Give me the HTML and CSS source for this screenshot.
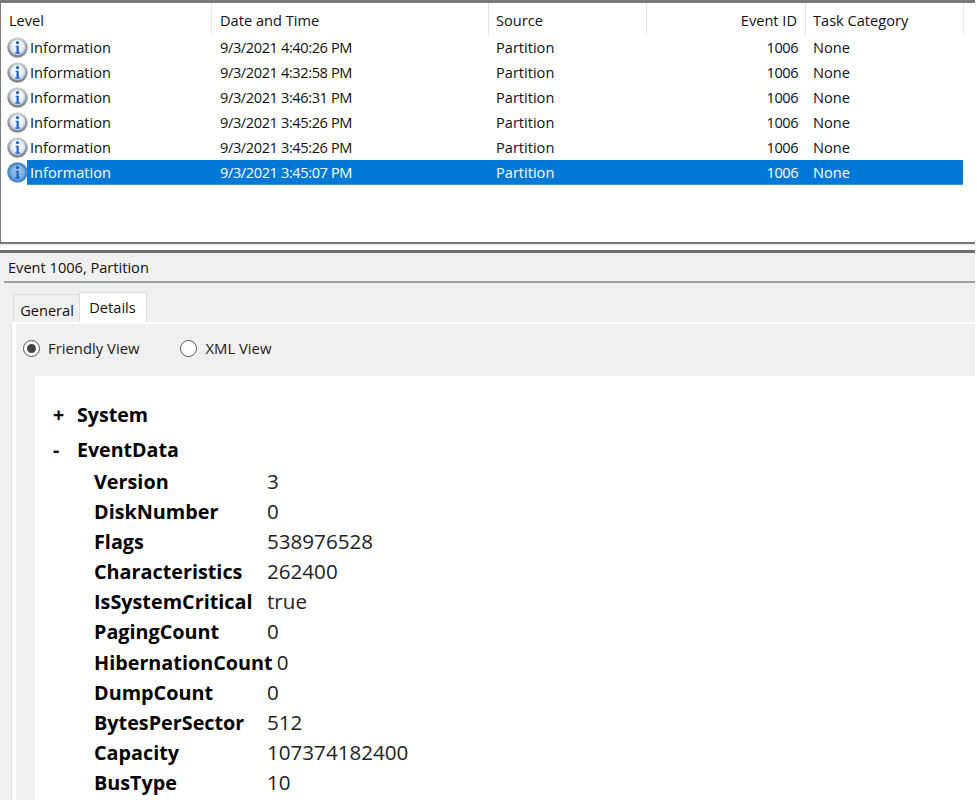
FILE: index.html
```html
<!DOCTYPE html>
<html lang="en">
<head>
<meta charset="utf-8">
<title>Event 1006, Partition</title>
<link rel="stylesheet" href="styles.css">
</head>
<body>
<svg class="defs" width="0" height="0" aria-hidden="true">
  <defs>
    <linearGradient id="ringN" x1="0" y1="0" x2="0" y2="1"><stop offset="0" stop-color="#d0d3d6"/><stop offset=".5" stop-color="#9a9ea2"/><stop offset="1" stop-color="#7f8286"/></linearGradient>
    <radialGradient id="discN" cx=".5" cy=".4" r=".6"><stop offset="0" stop-color="#ffffff"/><stop offset=".6" stop-color="#eaf0fa"/><stop offset="1" stop-color="#a9c2e6"/></radialGradient>
    <radialGradient id="discS" cx=".5" cy=".4" r=".6"><stop offset="0" stop-color="#a8cdf0"/><stop offset="1" stop-color="#5d9fdc"/></radialGradient>
    <symbol id="info" viewBox="0 0 21 21">
      <circle cx="10.5" cy="10.5" r="10.3" fill="url(#ringN)"/>
      <circle cx="10.5" cy="10.5" r="7.8" fill="url(#discN)"/>
      <circle cx="10.5" cy="5.7" r="1.6" fill="#2a63bf"/>
      <path d="M8.6 8.8h3.2v6.6h1.1v1.3H8.3v-1.3h1.2v-5.3H8.6z" fill="#2a63bf"/>
    </symbol>
    <symbol id="info-sel" viewBox="0 0 21 21">
      <circle cx="10.5" cy="10.5" r="10.3" fill="#4a88c4"/>
      <circle cx="10.5" cy="10.5" r="7.8" fill="url(#discS)"/>
      <circle cx="10.5" cy="5.7" r="1.6" fill="#1f5fb4"/>
      <path d="M8.6 8.8h3.2v6.6h1.1v1.3H8.3v-1.3h1.2v-5.3H8.6z" fill="#1f5fb4"/>
    </symbol>
  </defs>
</svg>
<div class="window">
  <section class="list">
    <div class="row head">
      <div class="c level">Level</div>
      <div class="c date">Date and Time</div>
      <div class="c source">Source</div>
      <div class="c id">Event ID</div>
      <div class="c task">Task Category</div>
    </div>
    <div class="row"><svg class="icon"><use href="#info"/></svg><div class="c level">Information</div><div class="c date">9/3/2021 4:40:26 PM</div><div class="c source">Partition</div><div class="c id">1006</div><div class="c task">None</div></div>
    <div class="row"><svg class="icon"><use href="#info"/></svg><div class="c level">Information</div><div class="c date">9/3/2021 4:32:58 PM</div><div class="c source">Partition</div><div class="c id">1006</div><div class="c task">None</div></div>
    <div class="row"><svg class="icon"><use href="#info"/></svg><div class="c level">Information</div><div class="c date">9/3/2021 3:46:31 PM</div><div class="c source">Partition</div><div class="c id">1006</div><div class="c task">None</div></div>
    <div class="row"><svg class="icon"><use href="#info"/></svg><div class="c level">Information</div><div class="c date">9/3/2021 3:45:26 PM</div><div class="c source">Partition</div><div class="c id">1006</div><div class="c task">None</div></div>
    <div class="row"><svg class="icon"><use href="#info"/></svg><div class="c level">Information</div><div class="c date">9/3/2021 3:45:26 PM</div><div class="c source">Partition</div><div class="c id">1006</div><div class="c task">None</div></div>
    <div class="row selected"><svg class="icon"><use href="#info-sel"/></svg><div class="c level">Information</div><div class="c date">9/3/2021 3:45:07 PM</div><div class="c source">Partition</div><div class="c id">1006</div><div class="c task">None</div></div>
  </section>
  <div class="splitter"></div>
  <h1 class="event-title">Event 1006, Partition</h1>
  <div class="tabs">
    <div class="tab">General</div>
    <div class="tab active">Details</div>
  </div>
  <section class="panel">
    <div class="radios">
      <label class="radio on"><span class="dot"></span>Friendly View</label>
      <label class="radio"><span class="dot"></span>XML View</label>
    </div>
    <div class="tree">
      <div class="node"><span class="sign">+</span>System</div>
      <div class="node open"><span class="sign">-</span>EventData</div>
      <div class="pair"><span class="k">Version</span><span class="v">3</span></div>
      <div class="pair"><span class="k">DiskNumber</span><span class="v">0</span></div>
      <div class="pair"><span class="k">Flags</span><span class="v">538976528</span></div>
      <div class="pair"><span class="k">Characteristics</span><span class="v">262400</span></div>
      <div class="pair"><span class="k">IsSystemCritical</span><span class="v">true</span></div>
      <div class="pair"><span class="k">PagingCount</span><span class="v">0</span></div>
      <div class="pair"><span class="k">HibernationCount</span><span class="v">0</span></div>
      <div class="pair"><span class="k">DumpCount</span><span class="v">0</span></div>
      <div class="pair"><span class="k">BytesPerSector</span><span class="v">512</span></div>
      <div class="pair"><span class="k">Capacity</span><span class="v">107374182400</span></div>
      <div class="pair"><span class="k">BusType</span><span class="v">10</span></div>
    </div>
  </section>
</div>
</body>
</html>
```
FILE: styles.css
```css
* { box-sizing: border-box; }
html, body { margin: 0; padding: 0; background: #fff; }
body { height: 800px; overflow: hidden; font-family: "Open Sans", "Noto Sans", "Liberation Sans", sans-serif; color: #111; }
.defs { display: block; height: 0; }
.window { width: 975px; height: 800px; overflow: hidden; background: #f0f0f0; display: flex; flex-direction: column; }

.list { height: 244px; flex: none; background: #fff; border-top: 3px solid #7a7a7a; border-left: 1px solid #7a7a7a; border-bottom: 2px solid #777; }
.row { position: relative; display: flex; height: 25px; align-items: center; font-size: 14.6px; line-height: 25px; margin-right: 11px; }
.row.head { height: 32px; align-items: stretch; line-height: 34px; }
.c { position: relative; padding: 0 8px; white-space: nowrap; flex: none; }
.head .c { border-right: 1px solid #e5e5e5; height: 32px; }
.level { width: 211px; padding-left: 29px; }
.head .level { padding-left: 8px; }
.date { width: 277px; }
.source { width: 158px; padding-left: 7px; }
.id { width: 159px; text-align: right; padding-right: 8px; }
.task { width: 158px; padding-left: 7px; }
.row:not(.head) .date { letter-spacing: -0.4px; }
.row:not(.head) .id { letter-spacing: -0.5px; }
.icon { position: absolute; left: 6px; top: 2px; width: 21px; height: 21px; }
.selected { color: #fff; }
.selected::before { content: ""; position: absolute; left: 26px; right: 1px; top: 0; bottom: 0; background: #0078d7; border-bottom: 1px solid #2f93e2; }

.splitter { height: 8px; flex: none; margin-top: 1px; background: linear-gradient(#f0f0f0 0 1px, #fff 1px 5px, #f0f0f0 5px); border-bottom: 3px solid #6f6f6f; }
.event-title { margin: 0 0 0 4px; height: 30px; flex: none; padding: 0 0 0 4px; font-size: 14.6px; font-weight: 400; line-height: 29px; border-bottom: 2px solid #a0a0a0; background: #f0f0f0; }

.tabs { display: flex; align-items: flex-end; height: 39px; flex: none; padding-left: 13px; }
.tab { width: 66px; height: 28px; font-size: 14.6px; line-height: 31px; padding-left: 1px; text-align: center; background: #f0f0f0; border: 1px solid #dcdcdc; border-bottom: 0; border-right: 0; }
.tab.active { width: 68px; height: 30px; line-height: 29px; padding: 0 1px 0 0; background: #fff; border: 1px solid #dcdcdc; border-bottom: 0; }

.panel { flex: 1; margin-left: 11px; background: #f0f0f0; border-top: 2px solid #fff; border-left: 1px solid #dcdcdc; box-shadow: inset 4px 0 0 #fff; padding-left: 4px; }
.radios { display: flex; height: 52px; align-items: center; padding: 0 0 4px 7px; gap: 41px; font-size: 14.85px; color: #222; }
.radio { display: flex; align-items: center; gap: 8px; }
.dot { width: 17px; height: 17px; border-radius: 50%; background: #fff; border: 1.5px solid #555; position: relative; }
.on .dot::after { content: ""; position: absolute; inset: 3px; border-radius: 50%; background: #444; }
.tree { margin-left: 19px; height: 430px; background: #fff; padding-top: 21px; }
.node { display: flex; height: 35px; align-items: center; font-size: 19.6px; font-weight: 700; line-height: 35px; padding-left: 18px; color: #000; }
.node.open { height: 34px; }
.sign { width: 24px; flex: none; }
.pair { display: flex; height: 30.1px; align-items: baseline; padding-left: 59px; font-size: 19.8px; line-height: 30px; color: #000; white-space: nowrap; }
.k { min-width: 173px; padding-right: 4px; font-weight: 700; }
.v { font-weight: 400; font-size: 20.6px; color: #222; }
```
